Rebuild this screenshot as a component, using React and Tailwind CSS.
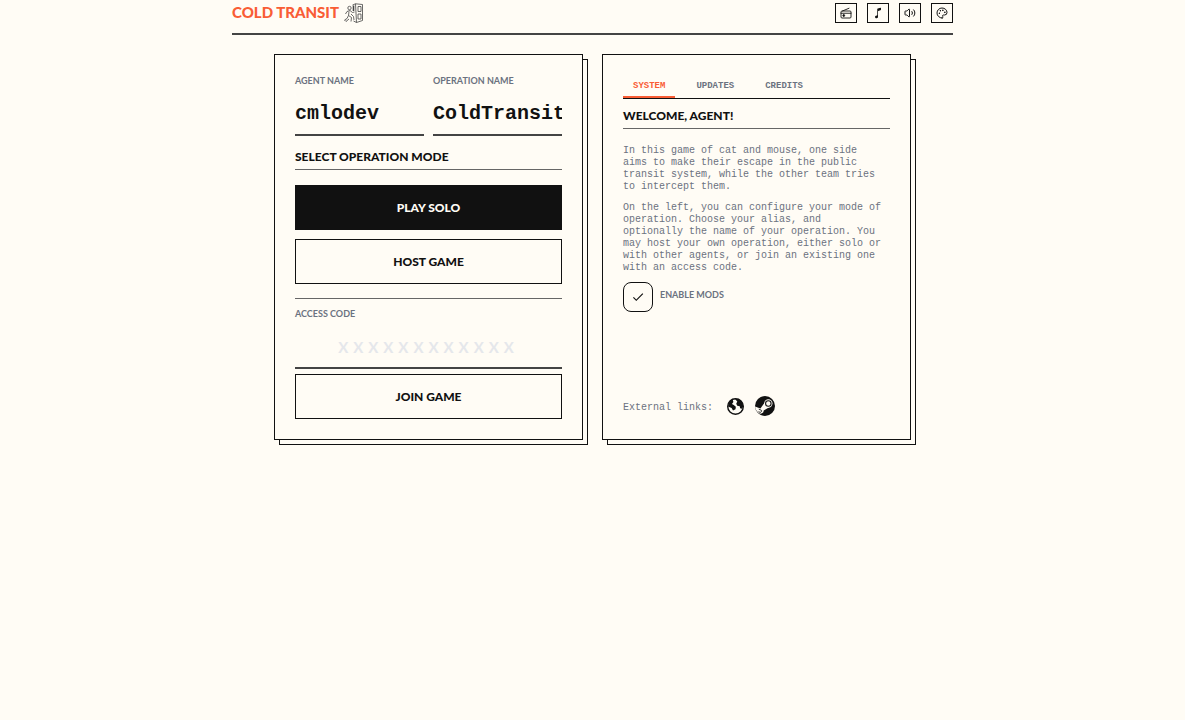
import { useState } from "react";
import { Palette, Volume2 } from "lucide-react";
import { IoMusicalNote } from "react-icons/io5";
import { MdCheck } from "react-icons/md";

function RadioIcon({ className }) {
  return (
    <svg viewBox="0 0 24 24" className={className} fill="none" stroke="currentColor" strokeWidth="1.8" strokeLinejoin="round" aria-hidden="true">
      <rect x="2" y="8" width="20" height="14" rx="2" />
      <path d="M5 8 L18 2.5 M2 12.5 H22" strokeLinecap="round" />
      <circle cx="7.5" cy="17" r="1.8" fill="currentColor" />
    </svg>
  );
}

function GlobeIcon({ className }) {
  return (
    <svg viewBox="0 0 24 24" className={className} aria-hidden="true">
      <circle cx="12" cy="12" r="11" fill="none" stroke="currentColor" strokeWidth="2" />
      <path
        d="M1.5 12 C1.5 6.5 4.5 3 8 2 L9 5.5 L7 8.5 L9.5 10 L12.5 12.5 L12 16 L8.5 17.5 L6.5 14 Z"
        fill="currentColor"
      />
      <path
        d="M11 1.2 C18 1 23 6 23 12 L21 15 L18.5 14.5 L18 11.5 L14.5 11 L13 8 L14.5 5 Z"
        fill="currentColor"
      />
    </svg>
  );
}

function SteamIcon({ className }) {
  return (
    <svg viewBox="0 0 24 24" className={className} aria-hidden="true">
      <circle cx="12" cy="12" r="12" fill="currentColor" />
      <path d="M0 12.5 L6.5 15 L11.5 8 L17 13.5 L10.5 17.5 A3.8 3.8 0 0 1 3.5 19.5 L1 16.5 Z" fill="#fffcf5" />
      <circle cx="16" cy="9" r="5" fill="#fffcf5" />
      <circle cx="16" cy="9" r="3.3" fill="none" stroke="currentColor" strokeWidth="1.3" />
      <path d="M4.5 15.8 L7.5 17 A1.6 1.6 0 0 1 6 19.6 L4.2 18.8" fill="none" stroke="currentColor" strokeWidth="1" />
    </svg>
  );
}

const tools = [
  { label: "Radio", Icon: RadioIcon },
  { label: "Music", Icon: IoMusicalNote },
  { label: "Sound", Icon: Volume2 },
  { label: "Theme", Icon: Palette },
];

const tabs = ["SYSTEM", "UPDATES", "CREDITS"];

function Logo() {
  return (
    <svg viewBox="0 0 20 21" className="w-5 h-[21px]" fill="none" stroke="#444" strokeWidth="0.8" aria-hidden="true">
      {/* train door */}
      <path d="M8.5 3 L11.5 1.8 L18.5 2.5 V18.5 L12.5 20.5 L9.5 19" />
      <path d="M11.5 1.8 L12.5 20.5 M14 4.5 H17 V9.5 H14 Z M14 12 H17 V17 H14 Z" />
      <path d="M9.5 3.5 V9" strokeWidth="1.6" />
      {/* runner */}
      <circle cx="5.5" cy="6" r="1.7" />
      <path d="M3 9.5 L6 8.5 L8.5 10.5 L10.5 10 M3 9.5 L1.5 12 M5 9.5 L4.5 13.5 L7.5 15.5 L7 19.5 M4.5 13.5 L3 16.5 L0.5 18 L2 19.5 L5 17 M7 12 L9.5 14.5 L10 18" />
    </svg>
  );
}

function Card({ children }) {
  return (
    <section className="flex flex-col border border-[#111] bg-[#fffcf5] p-5 shadow-[5px_5px_0_-1px_#fffcf5,5px_5px_0_0_#111]">
      {children}
    </section>
  );
}

function SectionTitle({ children }) {
  return (
    <h2 className="border-b border-[#666] pb-[5px] text-[12px] leading-[14px] font-black text-[#111]">
      {children}
    </h2>
  );
}

function Field({ id, label, ...rest }) {
  return (
    <div className="min-w-0 flex-1">
      <label htmlFor={id} className="block text-[9px] leading-3 font-bold text-[#6b7280]">
        {label}
      </label>
      <input
        id={id}
        className="mt-[6px] block h-[43px] w-full border-b-2 border-[#444] bg-transparent font-['Liberation_Mono',monospace] text-[20px] font-bold text-[#111] outline-none"
        {...rest}
      />
    </div>
  );
}

export default function App() {
  const [agent, setAgent] = useState("cmlodev");
  const [operation, setOperation] = useState("ColdTransit");
  const [code, setCode] = useState("");
  const [activeTab, setActiveTab] = useState("SYSTEM");
  const [mods, setMods] = useState(true);

  return (
    <div className="min-h-screen bg-[#fffcf5] font-['Lato',sans-serif] text-[#111]">
      <header className="mx-auto flex h-[35px] max-w-[721px] items-start justify-between border-b-2 border-[#444]">
        <div className="flex items-start gap-[5px] pt-[2px]">
          <h1 className="text-[15px] leading-5 font-black text-[#f95d35]">COLD TRANSIT</h1>
          <Logo />
        </div>
        <div className="flex gap-[10px] pt-[3px]">
          {tools.map(({ label, Icon }) => (
            <button
              key={label}
              aria-label={label}
              className="flex h-5 w-[22px] items-center justify-center border border-[#111]"
            >
              <Icon className="size-3" />
            </button>
          ))}
        </div>
      </header>

      <main className="mx-auto mt-[19px] grid max-w-[637px] grid-cols-2 gap-[19px]">
        <Card>
          <div className="flex gap-[9px]">
            <Field id="agent" label="AGENT NAME" value={agent} onChange={(e) => setAgent(e.target.value)} />
            <Field id="operation" label="OPERATION NAME" value={operation} onChange={(e) => setOperation(e.target.value)} />
          </div>

          <div className="mt-[14px]">
            <SectionTitle>SELECT OPERATION MODE</SectionTitle>
          </div>

          <div className="mt-[15px] flex flex-col gap-[9px]">
            <button className="h-[45px] border border-[#111] bg-[#111] text-[12px] font-black text-[#fffcf5]">
              PLAY SOLO
            </button>
            <button className="h-[45px] border border-[#111] text-[12px] font-black">HOST GAME</button>
          </div>

          <div className="mt-[14px] border-t border-[#666] pt-[9px]">
            <label htmlFor="code" className="block text-[9px] leading-3 font-bold text-[#6b7280]">
              ACCESS CODE
            </label>
            <input
              id="code"
              value={code}
              onChange={(e) => setCode(e.target.value)}
              placeholder="XXXXXXXXXXXX"
              className="mt-[6px] block h-[43px] w-full border-b-2 border-[#444] bg-transparent text-center text-[15px] font-bold tracking-[5px] outline-none placeholder:text-[#e5e7eb]"
            />
          </div>
          <button className="mt-[5px] h-[45px] border border-[#111] text-[12px] font-black">JOIN GAME</button>
        </Card>

        <Card>
          <div role="tablist" className="flex gap-[11px] border-b border-[#111] font-['Liberation_Mono',monospace]">
            {tabs.map((tab) => (
              <button
                key={tab}
                role="tab"
                aria-selected={activeTab === tab}
                onClick={() => setActiveTab(tab)}
                className={`h-[23px] border-b-2 px-[10px] pt-[2px] text-[9px] font-bold ${
                  activeTab === tab ? "border-[#f95d35] text-[#f95d35]" : "border-transparent text-[#6b7280]"
                }`}
              >
                {tab}
              </button>
            ))}
          </div>

          <div className="mt-[10px]">
            <SectionTitle>WELCOME, AGENT!</SectionTitle>
          </div>

          <div className="mt-4 space-y-[9px] pr-1 font-['Liberation_Mono',monospace] text-[10px] leading-3 text-[#6b7280]">
            <p>
              In this game of cat and mouse, one side aims to make their escape in the public transit
              system, while the other team tries to intercept them.
            </p>
            <p>
              On the left, you can configure your mode of operation. Choose your alias, and optionally
              the name of your operation. You may host your own operation, either solo or with other
              agents, or join an existing one with an access code.
            </p>
          </div>

          <div className="mt-2 flex items-center gap-[7px]">
            <span className="grid size-[30px]">
              <input
                id="mods"
                type="checkbox"
                checked={mods}
                onChange={(e) => setMods(e.target.checked)}
                className="col-start-1 row-start-1 size-[30px] appearance-none rounded-lg border border-[#111]"
              />
              {mods && (
                <MdCheck className="pointer-events-none col-start-1 row-start-1 size-[14px] place-self-center" />
              )}
            </span>
            <label htmlFor="mods" className="pb-1 text-[9px] leading-3 font-bold text-[#6b7280]">
              ENABLE MODS
            </label>
          </div>

          <div className="mt-auto flex items-center pb-[3px]">
            <span className="pt-1 font-['Liberation_Mono',monospace] text-[10px] leading-3 text-[#6b7280]">
              External links:
            </span>
            <a href="#website" aria-label="Website" className="ml-[14px]">
              <GlobeIcon className="size-[17px]" />
            </a>
            <a href="#steam" aria-label="Steam" className="ml-[11px]">
              <SteamIcon className="size-5" />
            </a>
          </div>
        </Card>
      </main>
    </div>
  );
}
